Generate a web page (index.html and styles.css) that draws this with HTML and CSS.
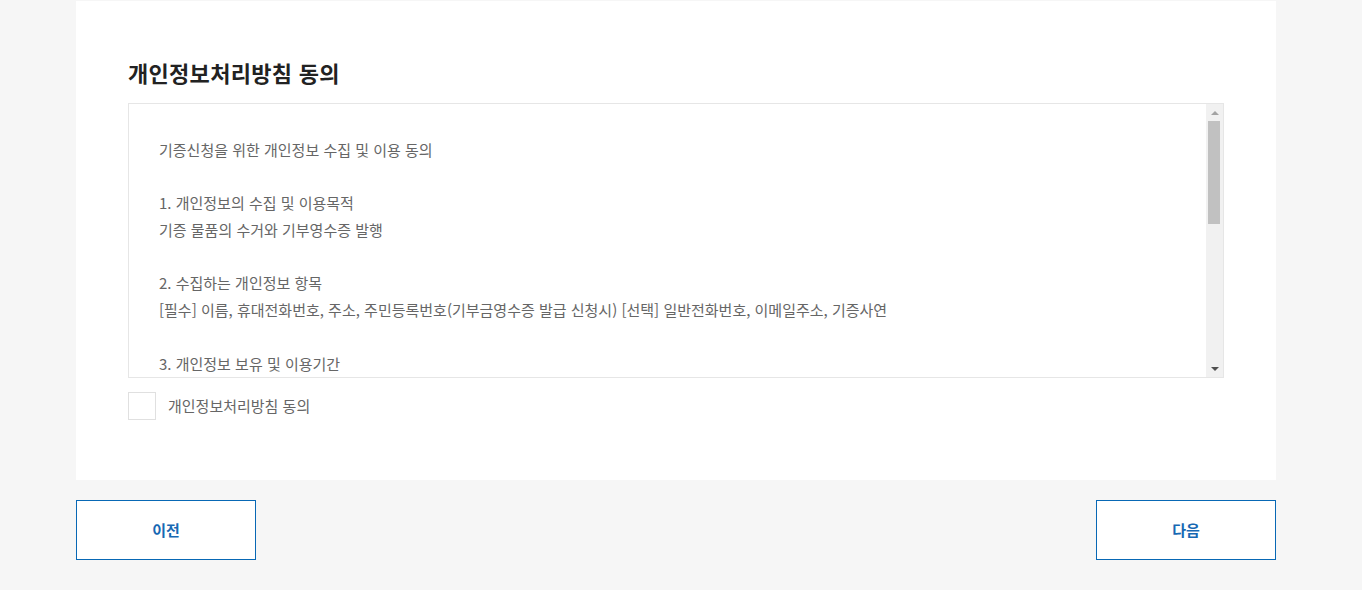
FILE: index.html
```html
<!DOCTYPE html>
<html lang="ko">
<head>
<meta charset="utf-8">
<title>개인정보처리방침 동의</title>
<link rel="stylesheet" href="styles.css">
</head>
<body>
<div class="wrap">
  <section class="card">
    <h2 class="title">개인정보처리방침 동의</h2>
    <div class="terms">
      <div class="terms-content">
        <p>기증신청을 위한 개인정보 수집 및 이용 동의</p>
        <p>1. 개인정보의 수집 및 이용목적<br>기증 물품의 수거와 기부영수증 발행</p>
        <p>2. 수집하는 개인정보 항목<br>[필수] 이름, 휴대전화번호, 주소, 주민등록번호(기부금영수증 발급 신청시) [선택] 일반전화번호, 이메일주소, 기증사연</p>
        <p>3. 개인정보 보유 및 이용기간<br>기증 완료 후 5년간 보관 (기부금영수증 발급 관련 법령에 따름)</p>
        <p>4. 동의를 거부할 권리 및 동의 거부 시 불이익<br>귀하는 개인정보 수집 및 이용에 대한 동의를 거부할 권리가 있습니다.</p>
      </div>
      <div class="scrollbar" aria-hidden="true">
        <span class="sb-btn sb-up"></span>
        <span class="sb-track"><span class="sb-thumb"></span></span>
        <span class="sb-btn sb-down"></span>
      </div>
    </div>
    <label class="agree">
      <span class="agree-box"></span>
      <span class="agree-text">개인정보처리방침 동의</span>
    </label>
  </section>
  <div class="actions">
    <button type="button" class="btn">이전</button>
    <button type="button" class="btn">다음</button>
  </div>
</div>
</body>
</html>
```
FILE: styles.css
```css
* { box-sizing: border-box; }
html, body {
  margin: 0;
  background: #f6f6f6;
  font-family: "Noto Sans CJK KR", "Noto Sans", sans-serif;
}
.wrap {
  width: 1200px;
  margin: 0 76px;
  padding-top: 1px;
}
.card {
  background: #fff;
  padding: 56px 52px 60px;
}
.title {
  margin: 0 0 16px;
  font-size: 22px;
  line-height: 30px;
  font-weight: 700;
  letter-spacing: 0.3px;
  color: #222;
}
.terms {
  display: flex;
  height: 275px;
  border: 1px solid #e6e6e6;
}
.terms-content {
  flex: 1;
  overflow: hidden;
  padding: 32.5px 30px 30px;
  font-size: 15px;
  line-height: 26.75px;
  color: #666;
}
.terms-content p { margin: 0 0 26.75px; }
.scrollbar {
  width: 17px;
  display: flex;
  flex-direction: column;
  background: #f1f1f1;
}
.sb-btn {
  height: 17px;
  display: flex;
  align-items: center;
  justify-content: center;
}
.sb-btn::before {
  content: "";
  width: 0;
  height: 0;
  border-left: 4px solid transparent;
  border-right: 4px solid transparent;
}
.sb-up::before { border-bottom: 4px solid #a3a3a3; }
.sb-down::before { border-top: 4px solid #505050; }
.sb-track {
  flex: 1;
  display: flex;
  flex-direction: column;
}
.sb-thumb {
  height: 103px;
  margin: 0 3px 0 2px;
  background: #c1c1c1;
}
.agree {
  display: flex;
  align-items: center;
  gap: 12px;
  margin-top: 14px;
  cursor: pointer;
}
.agree-box {
  width: 28px;
  height: 28px;
  border: 1px solid #e0e0e0;
  background: #fff;
}
.agree-text {
  font-size: 15px;
  color: #666;
  line-height: 28px;
}
.actions {
  display: flex;
  justify-content: space-between;
  margin-top: 20px;
}
.btn {
  width: 180px;
  height: 60px;
  padding: 0 0 2px;
  border: 1px solid #0868b5;
  background: #fff;
  color: #1768b3;
  font-family: "Noto Sans CJK KR", "Noto Sans", sans-serif;
  font-size: 15px;
  font-weight: 700;
  cursor: pointer;
}
```
